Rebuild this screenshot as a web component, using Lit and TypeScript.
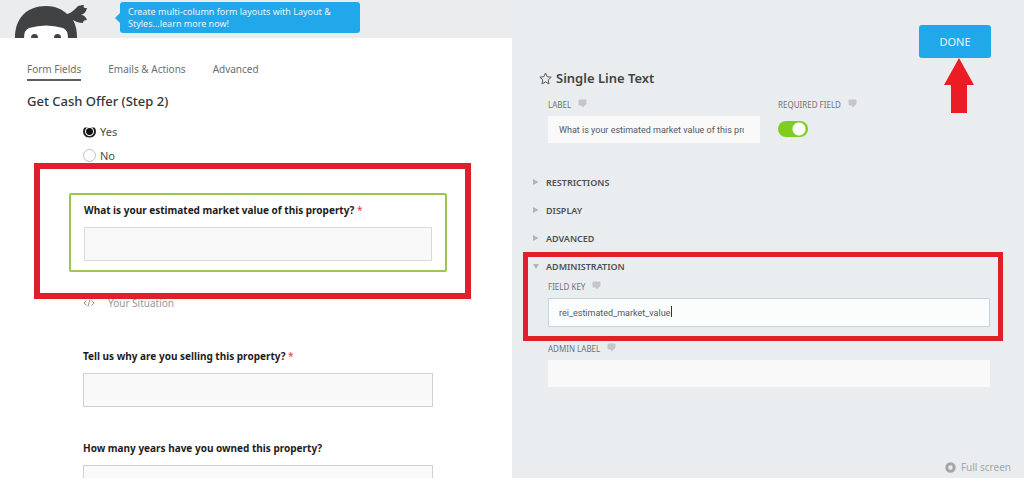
import { LitElement, html, css, svg, nothing } from "lit";
import { customElement, property } from "lit/decorators.js";
import { classMap } from "lit/directives/class-map.js";

const base = css`
  *, *::before, *::after { box-sizing: border-box; }
  button, input { font: inherit; color: inherit; margin: 0; }
  button { border: 0; background: none; padding: 0; cursor: pointer; text-align: left; }
  input:focus { outline: none; }
`;

@customElement("help-icon")
class HelpIcon extends LitElement {
  static styles = css`
    :host { display: block; }
    .icon { display: block; }
  `;
  render() {
    return html`<svg class="icon" width="9" height="9" viewBox="0 0 9 9" aria-hidden="true">
      <path d="M1.500 0.500h5.500A1.300 1.300 0 0 1 8.500 2v2.500A1.500 1.500 0 0 1 7.200 6L5 8.500 3.200 6.500H1.900A1.400 1.400 0 0 1 .5 5V2A1.400 1.400 0 0 1 1.900 .5z" fill="#c3c5c6" />
    </svg>`;
  }
}

@customElement("form-field")
class FormField extends LitElement {
  static styles = [base, css`
    :host { display: block; }
    .field { display: flex; flex-direction: column; gap: 9px; }
    .label { font-size: 10px; line-height: 16px; font-weight: 700; color: #1c1c1c; }
    .required { color: #e0393e; font-weight: 400; }
    .box { width: 100%; height: 34px; padding: 0 10px; border: 1px solid #d0d1d1; background: #f9f9f9; }
    .selected { margin: 0 -14px; padding: 7px 13px 9px; border: 2px solid #9cc653; border-radius: 2px; }
    .selected .box { border-color: #d9dada; }
  `];
  @property() label = "";
  @property({ type: Boolean }) required = false;
  @property({ type: Boolean }) selected = false;
  render() {
    return html`<div class=${classMap({ field: true, selected: this.selected })}>
      <label class="label" for="box">${this.label}${this.required ? html` <span class="required">*</span>` : nothing}</label>
      <input class="box" id="box" type="text" />
    </div>`;
  }
}

@customElement("builder-pane")
class BuilderPane extends LitElement {
  static styles = [base, css`
    :host { display: flex; flex-direction: column; min-width: 0; min-height: 0; background: #fff; }
    .header { flex: none; height: 38px; background: #ebeced; display: flex; align-items: flex-end; padding-left: 14px; gap: 32px; }
    .logo { display: block; flex: none; }
    .bubble { position: relative; align-self: flex-start; margin-top: 2px; width: 240px; padding: 4px 8px 3px; border-radius: 3px; background: #20a8ea; color: #e6f6ff; font-size: 9px; line-height: 12px; text-decoration: none; }
    .bubble::before { content: ""; position: absolute; left: -5px; top: 11px; border: 5px solid transparent; border-left: 0; border-right-color: #20a8ea; }
    .tabs { flex: none; display: flex; gap: 27px; padding: 22px 27px 0; }
    .tab { font-size: 10px; line-height: 18px; padding-bottom: 1px; border-bottom: 2px solid transparent; color: #6c6e70; }
    .active { border-color: #5c5e60; }
    .title { flex: none; margin: 0; padding: 10px 27px 0; font-size: 13px; line-height: 20px; font-weight: 500; color: #333536; }
    .scroll { flex: 1; min-height: 0; overflow: hidden; margin-top: 11px; padding: 0 79px 0 83px; }
    .options { margin-top: -3px; margin-bottom: 26px; }
    .option { display: flex; align-items: center; gap: 4px; height: 24px; font-size: 11px; line-height: 15px; color: #4a4c4d; }
    .radio { appearance: none; width: 13px; height: 13px; border: 1px solid #bfc0c1; border-radius: 50%; background: #fff; }
    .radio:checked { border: 2px solid #222; background: radial-gradient(circle, #111 3px, #fff 4px); clip-path: inset(3px 0 0 0); }
    .highlighted { position: relative; }
    .frame { position: absolute; inset: -30px -38px -27px -49px; border: 6px solid #df202b; pointer-events: none; }
    .html-item { display: flex; align-items: center; gap: 13px; margin: 23px 0 37px; font-size: 10px; line-height: 16px; color: #96989a; }
    .next { margin-bottom: 33px; display: block; }
  `];
  render() {
    return html`
      <header class="header">
        <svg class="logo" width="74" height="34" viewBox="0 0 74 34" aria-hidden="true">
          <path d="M1 34C1 14 13 2 32 2c9 0 16 3 21 8 5-1 8-5 11-8 3-1 5-1 6-1-1 3 0 3 3 3-1 4-3 6-6 7 3 0 5 2 6 5-3 0-4 1-4 3-4 0-7-1-10-3 3 5 4 11 4 18z" fill="#414243" />
          <path d="M10 34q0-8 5-10 17-5 34 0 5 2 5 10z" fill="#fff" />
          <path d="M17 34q0-4 3.500-4t3.500 4zM40 34q0-4 3.500-4t3.500 4z" fill="#414243" />
        </svg>
        <a class="bubble" href="#">Create multi-column form layouts with Layout &amp; Styles...learn more now!</a>
      </header>
      <nav class="tabs">
        <button class="tab active">Form Fields</button>
        <button class="tab">Emails &amp; Actions</button>
        <button class="tab">Advanced</button>
      </nav>
      <h1 class="title">Get Cash Offer (Step 2)</h1>
      <div class="scroll">
        <div class="options">
          <label class="option"><input class="radio" type="radio" name="answer" checked />Yes</label>
          <label class="option"><input class="radio" type="radio" name="answer" />No</label>
        </div>
        <div class="highlighted">
          <form-field label="What is your estimated market value of this property?" required selected></form-field>
          <div class="frame"></div>
        </div>
        <div class="html-item">
          <svg width="12" height="8" viewBox="0 0 12 8" fill="none" stroke="#909294" aria-hidden="true">
            <path d="M3.500 1.500L1 4l2.500 2.500M8.500 1.500L11 4 8.500 6.500M7 .5l-2 7" />
          </svg>
          Your Situation
        </div>
        <form-field class="next" label="Tell us why are you selling this property?" required></form-field>
        <form-field class="next" label="How many years have you owned this property?"></form-field>
      </div>`;
  }
}

@customElement("settings-pane")
class SettingsPane extends LitElement {
  static styles = [base, css`
    :host { display: flex; flex-direction: column; min-width: 0; min-height: 0; background: #eaedef; padding: 25px 34px 4px 21px; }
    .top { display: flex; justify-content: flex-end; margin-right: -1px; }
    .done-wrap { position: relative; }
    .done { display: block; width: 72px; height: 33px; border-radius: 3px; background: #20a8ea; color: #e6f6ff; font-size: 11px; text-align: center; }
    .arrow { position: absolute; left: 25px; top: 33px; pointer-events: none; }
    .heading { display: flex; align-items: center; gap: 4px; margin: 10px 0 11px 6px; font-size: 13px; line-height: 20px; font-weight: 600; color: #424446; }
    .pair { display: grid; grid-template-columns: 1fr 1fr; gap: 18px; padding-left: 15px; margin-bottom: 25px; }
    .caption { display: flex; gap: 7px; height: 12px; font-size: 8px; line-height: 12px; color: #6f7274; }
    .value { display: block; width: 100%; height: 27px; margin-top: 5px; padding: 0 16px 0 11px; border: 0; background: #f9f9fa; font: 9px Roboto, sans-serif; color: #55585a; }
    .focused { height: 29px; border: 1px solid #c3d7e0; background: #fbfcfc; padding: 0 10px; }
    .switch { appearance: none; display: block; width: 30px; height: 16px; margin-top: 10px; border-radius: 8px; background: radial-gradient(circle at 21px 8px, #fff 6px, transparent 7px) #7fce1f; }
    .section { display: flex; align-items: center; gap: 7px; width: 100%; height: 28px; font-size: 9px; font-weight: 600; color: #4d5052; }
    .admin { position: relative; }
    .body { padding: 1px 0 0 15px; }
    .entry { position: relative; }
    .caret { position: absolute; left: 123px; top: 25px; width: 1px; height: 11px; background: #333; }
    .frame { position: absolute; inset: 0 -13px -14px -10px; border: 5px solid #df202b; pointer-events: none; }
    .second { margin-top: 16px; padding-left: 15px; }
    .footer { margin-top: auto; margin-right: -21px; display: flex; justify-content: flex-end; }
    .full { display: flex; align-items: center; gap: 5px; font-size: 10px; line-height: 14px; color: #a3a6a8; }
  `];

  private section(name: string, open = false) {
    return html`<button class="section" aria-expanded=${open ? "true" : "false"}>
      <svg width="6" height="8" viewBox="0 0 6 8" aria-hidden="true">
        ${open ? svg`<path d="M0 2h6L3 7z" fill="#b3b6b8" />` : svg`<path d="M0 1l5.500 3L0 7z" fill="#b3b6b8" />`}
      </svg>${name}</button>`;
  }

  render() {
    return html`
      <div class="top">
        <div class="done-wrap">
          <button class="done">DONE</button>
          <svg class="arrow" width="30" height="55" viewBox="0 0 30 55" aria-hidden="true">
            <path d="M15 0l15 27h-7v28H7V27H0z" fill="#ec1c24" />
          </svg>
        </div>
      </div>
      <h2 class="heading">
        <svg width="13" height="13" viewBox="0 0 13 13" fill="none" stroke="#55585a" stroke-linejoin="round" aria-hidden="true">
          <path d="M6.500 1l1.700 3.700 4 .5-3 2.700.8 4-3.500-2-3.500 2 .8-4-3-2.700 4-.5z" />
        </svg>
        Single Line Text
      </h2>
      <div class="pair">
        <div>
          <div class="caption"><label for="label">LABEL</label><help-icon></help-icon></div>
          <input class="value" id="label" type="text" value="What is your estimated market value of this property?" />
        </div>
        <div>
          <div class="caption"><label for="required">REQUIRED FIELD</label><help-icon></help-icon></div>
          <input class="switch" id="required" type="checkbox" role="switch" checked />
        </div>
      </div>
      ${this.section("RESTRICTIONS")} ${this.section("DISPLAY")} ${this.section("ADVANCED")}
      <div class="admin">
        ${this.section("ADMINISTRATION", true)}
        <div class="body">
          <div class="entry">
            <div class="caption"><label for="key">FIELD KEY</label><help-icon></help-icon></div>
            <input class="value focused" id="key" type="text" value="rei_estimated_market_value" />
            <span class="caret"></span>
          </div>
        </div>
        <div class="frame"></div>
      </div>
      <div class="second">
        <div class="caption"><label for="admin-label">ADMIN LABEL</label><help-icon></help-icon></div>
        <input class="value" id="admin-label" type="text" />
      </div>
      <div class="footer">
        <button class="full">
          <svg width="11" height="11" viewBox="0 0 11 11" aria-hidden="true">
            <circle cx="5.500" cy="5.500" r="3.700" fill="none" stroke="#a3a6a8" stroke-width="3" />
          </svg>
          Full screen
        </button>
      </div>`;
  }
}

@customElement("app-root")
class AppRoot extends LitElement {
  static styles = css`
    :host { display: grid; grid-template-columns: minmax(0, 1fr) minmax(0, 1fr); grid-template-rows: minmax(0, 1fr); height: 100vh; overflow: hidden; background: #eaedef; font-family: "Noto Sans", "Open Sans", sans-serif; }
  `;
  render() {
    return html`<builder-pane></builder-pane><settings-pane></settings-pane>`;
  }
}
